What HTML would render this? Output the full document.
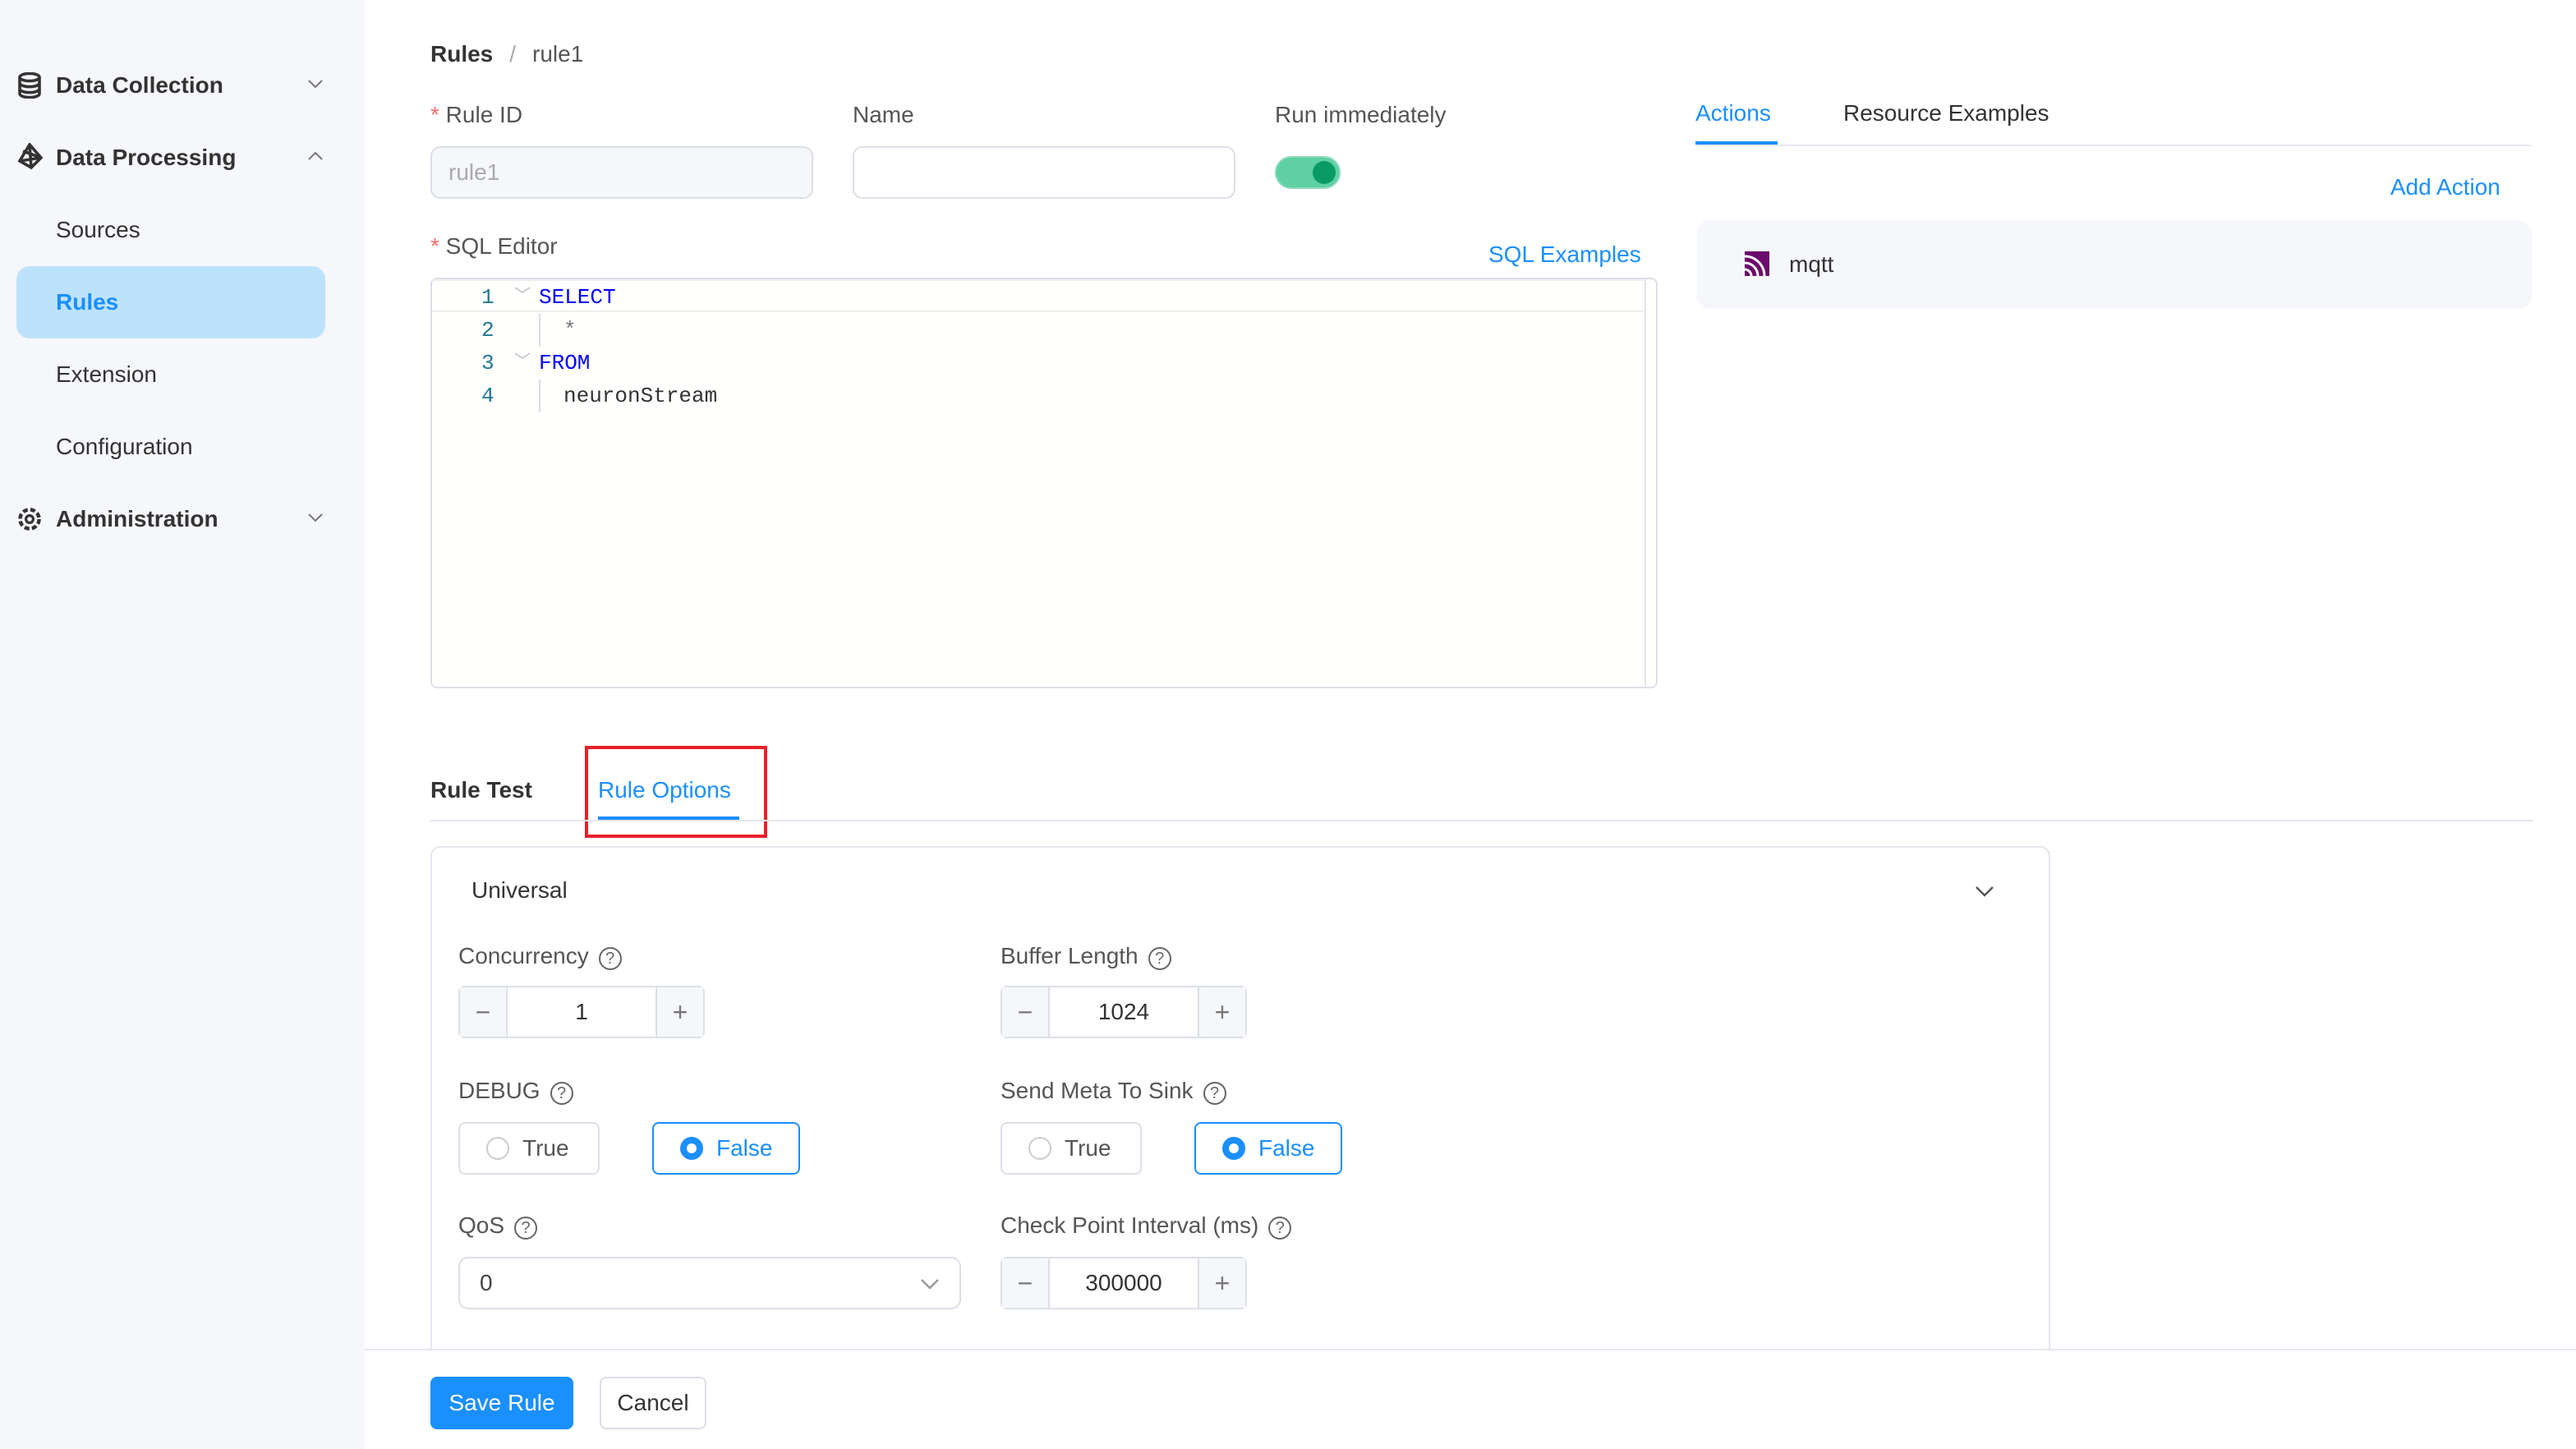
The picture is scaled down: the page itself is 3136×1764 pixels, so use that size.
<!DOCTYPE html>
<html><head><meta charset="utf-8"><style>
html{zoom:2}
*{box-sizing:border-box;margin:0;padding:0}
body{width:1568px;height:882px;overflow:hidden;background:#fff;font-family:"Liberation Sans",sans-serif;color:#333;font-size:14px;position:relative}
.a{position:absolute}
.side{left:0;top:0;width:222px;height:882px;background:#f6f7fb}
.mi{position:absolute;left:34px;font-size:14px;color:#333}
.b{font-weight:bold;color:#333}
.lbl{font-size:14px;color:#555}
.star{color:#f56c6c}
.inp{border:1px solid #dcdfe6;border-radius:6px;height:32px;background:#fff}
.blue{color:#1a8ffe}
.num{position:absolute;height:32px;width:150px;border:1px solid #dcdfe6;border-radius:4px;display:flex}
.num span{width:28px;background:#f5f7fa;display:flex;align-items:center;justify-content:center;color:#777;font-size:16px}
.num i{flex:1;text-align:center;line-height:30px;font-style:normal;border-left:1px solid #dcdfe6;border-right:1px solid #dcdfe6}
.rad{position:absolute;height:32px;border:1px solid #dcdfe6;border-radius:4px;display:flex;align-items:center;padding-left:16px;font-size:14px;color:#555}
.rad b{width:14px;height:14px;border:1px solid #ccc;border-radius:50%;margin-right:8px;display:inline-block}
.rad.on{border-color:#1a8ffe;color:#1a8ffe}
.rad.on b{border:4px solid #1a8ffe}
.q{display:inline-block;width:14px;height:14px;border:1px solid #666;border-radius:50%;font-size:10px;text-align:center;line-height:12px;margin-left:6px;vertical-align:0px;color:#666}
.code{font-family:"Liberation Mono",monospace;font-size:13px}
</style></head><body>
<div class="a side">
<svg class="a" style="left:11px;top:44px" width="14" height="16" viewBox="0 0 14 16"><ellipse cx="7" cy="3" rx="6" ry="2.3" fill="none" stroke="#333" stroke-width="1.8"/><path d="M1 3v10c0 1.3 2.7 2.3 6 2.3s6-1 6-2.3V3M1 6.5c0 1.3 2.7 2.3 6 2.3s6-1 6-2.3M1 10c0 1.3 2.7 2.3 6 2.3s6-1 6-2.3" fill="none" stroke="#333" stroke-width="1.8"/></svg>
<div class="mi b" style="top:44px">Data Collection</div>
<svg class="a" style="left:187px;top:48px" width="10" height="6"><path d="M1 1l4 4 4-4" fill="none" stroke="#777"/></svg>
<svg class="a" style="left:10px;top:87px" width="17" height="17" viewBox="0 0 17 17"><path d="M8 1L2 11l7 4 6-6zM8 1l1 14M2 11l13-2M4 5l11 4" fill="none" stroke="#333" stroke-width="1.8"/></svg>
<div class="mi b" style="top:88px">Data Processing</div>
<svg class="a" style="left:187px;top:92px" width="10" height="6"><path d="M1 5l4-4 4 4" fill="none" stroke="#777"/></svg>
<div class="mi" style="top:132px">Sources</div>
<div class="a" style="left:10px;top:162px;width:188px;height:44px;background:#bde2fd;border-radius:8px"></div>
<div class="mi b" style="top:176px;color:#1a8ffe">Rules</div>
<div class="mi" style="top:220px">Extension</div>
<div class="mi" style="top:264px">Configuration</div>
<svg class="a" style="left:10px;top:308px" width="16" height="16" viewBox="0 0 16 16"><circle cx="8" cy="8" r="5.8" fill="none" stroke="#333" stroke-width="2.2" stroke-dasharray="3 1.6"/><circle cx="8" cy="8" r="2.2" fill="none" stroke="#333" stroke-width="1.6"/></svg>
<div class="mi b" style="top:308px">Administration</div>
<svg class="a" style="left:187px;top:312px" width="10" height="6"><path d="M1 1l4 4 4-4" fill="none" stroke="#777"/></svg>
</div>

<div class="a" style="left:262px;top:25px"><span class="b">Rules</span><span style="color:#aaa;margin:0 10px">/</span><span style="color:#555">rule1</span></div>

<div class="a lbl" style="left:262px;top:62px"><span class="star">*</span> Rule ID</div>
<div class="a inp" style="left:262px;top:89px;width:233px;background:#f5f7fa;color:#aaa;padding:7px 10px">rule1</div>
<div class="a lbl" style="left:519px;top:62px">Name</div>
<div class="a inp" style="left:519px;top:89px;width:233px"></div>
<div class="a lbl" style="left:776px;top:62px">Run immediately</div>
<div class="a" style="left:776px;top:95px;width:40px;height:20px;border-radius:10px;background:#5fd0a4;border:1px solid #8dd9bd"><div style="position:absolute;right:2px;top:2px;width:14px;height:14px;border-radius:50%;background:#0a9a68"></div></div>

<div class="a lbl" style="left:262px;top:142px"><span class="star">*</span> SQL Editor</div>
<div class="a blue" style="left:906px;top:147px">SQL Examples</div>
<div class="a" style="left:262px;top:169px;width:747px;height:250px;border:1px solid #dcdfe6;border-radius:4px;background:#fffffd">
<div class="a" style="left:0;top:0;right:6px;height:20px;border-bottom:1px solid #eee;border-top:1px solid #eee"></div>
<div class="a" style="right:6px;top:0;bottom:0;border-left:1px solid #e5e5e5"></div>
<div class="a code" style="left:30px;top:1px;line-height:20px;color:#237893">1<br>2<br>3<br>4</div>
<div class="a code" style="left:50px;top:1px;line-height:20px;color:#bbb;font-size:10px">﹀<br><br>﹀</div>
<div class="a code" style="left:65px;top:1px;line-height:20px"><span style="color:#00f">SELECT</span><br><span style="color:#777;padding-left:15px">*</span><br><span style="color:#00f">FROM</span><br><span style="padding-left:15px">neuronStream</span></div>
<div class="a" style="left:65px;top:21px;width:1px;height:20px;background:#ddd"></div>
<div class="a" style="left:65px;top:61px;width:1px;height:20px;background:#ddd"></div>
</div>

<div class="a blue" style="left:1032px;top:61px;font-size:14px">Actions</div>
<div class="a" style="left:1032px;top:86px;width:50px;height:2px;background:#1a8ffe"></div>
<div class="a" style="left:1122px;top:61px;color:#333">Resource Examples</div>
<div class="a" style="left:1032px;top:88px;width:509px;height:1px;background:#e4e7ed"></div>
<div class="a blue" style="left:1455px;top:106px">Add Action</div>
<div class="a" style="left:1033px;top:134px;width:508px;height:54px;background:#f6f7fb;border-radius:8px"></div>
<svg class="a" style="left:1062px;top:153px" width="15" height="15" viewBox="0 0 15 15"><rect width="15" height="15" fill="#6b0a6b"/><path d="M0 3a12 12 0 0 1 12 12M0 7a8 8 0 0 1 8 8M0 11a4 4 0 0 1 4 4" fill="none" stroke="#fff" stroke-width="1.5"/></svg>
<div class="a" style="left:1089px;top:153px">mqtt</div>

<div class="a b" style="left:262px;top:473px">Rule Test</div>
<div class="a blue" style="left:364px;top:473px">Rule Options</div>
<div class="a" style="left:364px;top:497px;width:86px;height:2px;background:#1a8ffe"></div>
<div class="a" style="left:356px;top:454px;width:111px;height:56px;border:2px solid #e8202a"></div>
<div class="a" style="left:262px;top:499px;width:1280px;height:1px;background:#e4e7ed"></div>

<div class="a" style="left:262px;top:515px;width:986px;height:330px;border:1px solid #e4e7ed;border-radius:6px"></div>
<div class="a" style="left:287px;top:534px;color:#333">Universal</div>
<svg class="a" style="left:1202px;top:539px" width="12" height="7"><path d="M1 1l5 5 5-5" fill="none" stroke="#555" stroke-width="1.2"/></svg>

<div class="a lbl" style="left:279px;top:574px">Concurrency<span class="q">?</span></div>
<div class="num" style="left:279px;top:600px"><span>−</span><i>1</i><span>+</span></div>
<div class="a lbl" style="left:609px;top:574px">Buffer Length<span class="q">?</span></div>
<div class="num" style="left:609px;top:600px"><span>−</span><i>1024</i><span>+</span></div>

<div class="a lbl" style="left:279px;top:656px">DEBUG<span class="q">?</span></div>
<div class="rad" style="left:279px;top:683px;width:86px"><b></b>True</div>
<div class="rad on" style="left:397px;top:683px;width:90px"><b></b>False</div>
<div class="a lbl" style="left:609px;top:656px">Send Meta To Sink<span class="q">?</span></div>
<div class="rad" style="left:609px;top:683px;width:86px"><b></b>True</div>
<div class="rad on" style="left:727px;top:683px;width:90px"><b></b>False</div>

<div class="a lbl" style="left:279px;top:738px">QoS<span class="q">?</span></div>
<div class="a inp" style="left:279px;top:765px;width:306px;padding:7px 12px;color:#444">0</div>
<svg class="a" style="left:560px;top:778px" width="12" height="7"><path d="M1 1l5 5 5-5" fill="none" stroke="#999" stroke-width="1.2"/></svg>
<div class="a lbl" style="left:609px;top:738px">Check Point Interval (ms)<span class="q">?</span></div>
<div class="num" style="left:609px;top:765px"><span>−</span><i>300000</i><span>+</span></div>

<div class="a" style="left:222px;top:821px;width:1346px;height:61px;background:#fff;border-top:1px solid #e4e7ed"></div>
<div class="a" style="left:262px;top:838px;width:87px;height:32px;background:#1a8ffe;border-radius:4px;color:#fff;text-align:center;line-height:32px">Save Rule</div>
<div class="a" style="left:365px;top:838px;width:65px;height:32px;border:1px solid #dcdfe6;border-radius:4px;text-align:center;line-height:30px;color:#333">Cancel</div>
</body></html>
